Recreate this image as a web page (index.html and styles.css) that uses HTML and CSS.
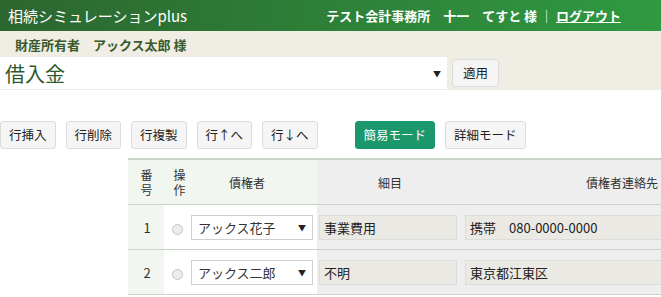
FILE: index.html
```html
<!DOCTYPE html>
<html lang="ja">
<head>
  <meta charset="UTF-8" />
  <title>借入金</title>
  <link rel="stylesheet" href="styles.css">
</head>
<body>

  <!-- ヘッダー -->
  <header class="topbar">
    <div class="logo">相続シミュレーションplus</div>
    <div class="user">テスト会計事務所　十一　てすと 様 ｜ <a href="#">ログアウト</a></div>
  </header>

  <div class="head-area">
    <div class="owner">財産所有者　アックス太郎 様</div>
    <div class="subject">
      <div class="subject-select">
        <span>借入金</span>
        <span class="arrow">▼</span>
      </div>
      <button class="btn">適用</button>
    </div>
  </div>

  <!-- ボタン -->
  <div class="toolbar">
    <button class="btn">行挿入</button>
    <button class="btn">行削除</button>
    <button class="btn">行複製</button>
    <button class="btn">行↑へ</button>
    <button class="btn">行↓へ</button>
    <button class="btn btn-green mode">簡易モード</button>
    <button class="btn">詳細モード</button>
  </div>

  <table class="grid">
    <colgroup>
      <col class="w-no">
      <col class="w-op">
      <col class="w-name">
      <col class="w-item">
      <col class="w-contact">
    </colgroup>
    <thead>
      <tr>
        <th class="c-no">番号</th>
        <th class="c-op">操作</th>
        <th class="c-name">債権者</th>
        <th class="gray">細目</th>
        <th class="gray">債権者連絡先</th>
      </tr>
    </thead>
    <tbody>
      <tr>
        <td class="c-no">1</td>
        <td class="c-op"><span class="radio"></span></td>
        <td><div class="sel"><span>アックス花子</span><span class="arrow">▼</span></div></td>
        <td class="gray"><div class="field">事業費用</div></td>
        <td class="gray"><div class="field">携帯　080-0000-0000</div></td>
      </tr>
      <tr>
        <td class="c-no">2</td>
        <td class="c-op"><span class="radio"></span></td>
        <td><div class="sel"><span>アックス二郎</span><span class="arrow">▼</span></div></td>
        <td class="gray"><div class="field">不明</div></td>
        <td class="gray"><div class="field">東京都江東区</div></td>
      </tr>
    </tbody>
  </table>

</body>
</html>
```

FILE: styles.css
```css
html, body {
  margin: 0;
  padding: 0;
  background: #fff;
  overflow: hidden;
  font-family: "Noto Sans CJK JP", "Noto Sans", sans-serif;
  color: #333;
}

.topbar {
  height: 31px;
  display: flex;
  align-items: center;
  justify-content: space-between;
  padding: 0 40px 0 8px;
  background: linear-gradient(to right, #2c662f, #2f9a41);
  color: #fff;
}

.logo {
  font-size: 15px;
}

.user {
  font-size: 13px;
  font-weight: bold;
}

.user a {
  color: #fff;
}

.head-area {
  background: #efede4;
  padding-bottom: 1px;
}

.owner {
  height: 26px;
  line-height: 28px;
  padding-left: 15px;
  font-size: 13px;
  font-weight: bold;
  color: #3b5a2c;
}

.subject {
  display: flex;
  align-items: center;
}

.subject-select {
  width: 447px;
  height: 32px;
  background: #fff;
  display: flex;
  align-items: center;
  justify-content: space-between;
  box-sizing: border-box;
  padding: 0 6px 0 5px;
  font-size: 20px;
  color: #2f5a2c;
}

.arrow {
  font-size: 8px;
  color: #222;
}

.subject .btn {
  margin-left: 5px;
  width: 47px;
}

.btn {
  height: 28px;
  padding: 0 8px;
  border: 1px solid #dcdcdc;
  border-radius: 3px;
  background: #f5f5f5;
  font-family: inherit;
  font-size: 12.5px;
  color: #222;
  line-height: 26px;
  white-space: nowrap;
}

.toolbar {
  display: flex;
  gap: 10px;
  margin-top: 31px;
}

.btn-green {
  background: #1b986b;
  border-color: #1b986b;
  color: #fff;
}

.mode {
  margin-left: 27px;
}

.grid {
  margin: 9px 0 0 128px;
  border-collapse: collapse;
  width: 653px;
  font-size: 12px;
  table-layout: fixed;
}

.w-no { width: 36px; }
.w-op { width: 27px; }
.w-name { width: 126px; }
.w-item { width: 146px; }
.w-contact { width: 318px; }

.grid th {
  height: 44px;
  padding: 0;
  font-weight: normal;
  color: #333;
  background: #f2f6f0;
  border-top: 2px solid #c9d3c7;
  border-bottom: 1px solid #c9d3c7;
}

.grid td {
  height: 44px;
  border-bottom: 1px solid #c9d3c7;
  padding: 0;
}

.grid th.gray,
.grid td.gray {
  background: #eeeeee;
}

.c-no,
.c-op {
  text-align: center;
}

.grid th.c-no {
  padding: 0 10px 0 11px;
  line-height: 15px;
}

.grid th.c-op {
  padding: 0 4px 0 8px;
  line-height: 15px;
}

.grid th.c-name {
  padding-right: 14px;
}

.grid td.c-no {
  background: #f2f6f0;
  font-size: 13px;
  padding-left: 2px;
}

.radio {
  display: inline-block;
  width: 9px;
  height: 9px;
  border: 1px solid #c4c4c4;
  border-radius: 50%;
  background: #ececec;
  vertical-align: middle;
}

.sel {
  width: 122px;
  height: 25px;
  box-sizing: border-box;
  border: 1px solid #cfcfcf;
  background: #fff;
  display: flex;
  align-items: center;
  justify-content: space-between;
  padding: 0 6px 0 6px;
  font-size: 13px;
}

.field {
  height: 25px;
  box-sizing: border-box;
  border: 1px solid #dcdcdc;
  background: #ebe9e4;
  margin: 0 6px 0 2px;
  padding: 0 4px;
  line-height: 23px;
  font-size: 13px;
  color: #222;
}
```
